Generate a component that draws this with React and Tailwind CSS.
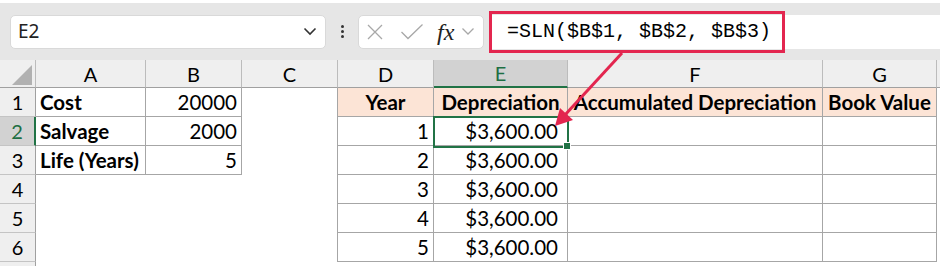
import React from "react";

const CELL_FONT = { fontFamily: "Lato, 'Liberation Sans', sans-serif" };

function HeaderCell({ label, selected }) {
  if (selected) {
    return (
      <div className="h-[28px] flex items-center justify-center bg-[#d2d2d2] text-[#1e6f43] border-r border-r-[#bcbcbc] border-b-2 border-b-[#217346] text-[20px]">
        {label}
      </div>
    );
  }
  return (
    <div className="h-[28px] flex items-center justify-center bg-[#efefef] text-black border-r border-r-[#bcbcbc] border-b border-b-[#a0a0a0] text-[20px]">
      {label}
    </div>
  );
}

function RowHead({ n, selected, short }) {
  if (selected) {
    return (
      <div className="h-[29px] flex items-center justify-center bg-[#d2d2d2] text-[#1e6f43] border-r-2 border-r-[#217346] border-b border-b-[#c4c4c4] text-[20px]">
        {n}
      </div>
    );
  }
  if (short) {
    return <div className="h-[4px] bg-[#efefef] border-r border-r-[#a0a0a0]"></div>;
  }
  return (
    <div className="h-[29px] flex items-center justify-center bg-[#efefef] text-black border-r border-r-[#a0a0a0] border-b border-b-[#c4c4c4] text-[20px]">
      {n}
    </div>
  );
}

const B = "border-[#a6a6a6]";

export default function App() {
  const dataRows = [1, 2, 3, 4, 5];
  return (
    <div className="relative w-[940px] h-[266px] overflow-hidden bg-white" style={CELL_FONT}>
      {/* top white strip */}
      <div className="h-[3px] bg-white"></div>
      {/* formula bar */}
      <div className="h-[57px] bg-[#e6e6e6] flex items-center">
        <div className="ml-[10px] w-[316px] h-[34px] bg-white rounded-[5px] border border-[#d9d9d9] flex items-center justify-between pl-[7px] pr-[8px]">
          <span className="text-[19px] text-[#222] leading-none" style={{ fontFamily: "'Noto Sans', 'Open Sans', sans-serif" }}>E2</span>
          <svg width="14" height="9" viewBox="0 0 14 9">
            <path d="M1.5 1.5 L7 7 L12.5 1.5" fill="none" stroke="#333" strokeWidth="1.6" />
          </svg>
        </div>
        <div className="w-[32px] flex flex-col items-center justify-center gap-[2px]">
          <span className="w-[3px] h-[3px] rounded-full bg-[#333]"></span>
          <span className="w-[3px] h-[3px] rounded-full bg-[#333]"></span>
          <span className="w-[3px] h-[3px] rounded-full bg-[#333]"></span>
        </div>
        <div className="w-[126px] h-[34px] bg-white rounded-[5px] border border-[#d9d9d9] flex items-center pl-[7px]">
          <svg width="18" height="18" viewBox="0 0 18 18" className="shrink-0">
            <path d="M2 2 L16 16 M16 2 L2 16" stroke="#a8a8a8" strokeWidth="1.3" fill="none" />
          </svg>
          <svg width="24" height="18" viewBox="0 0 24 18" className="ml-[16px] shrink-0">
            <path d="M1.5 9 L8 15.5 L22.5 1.5" stroke="#a8a8a8" strokeWidth="1.3" fill="none" />
          </svg>
          <span className="ml-[13px] text-[24px] italic leading-none text-[#222]" style={{ fontFamily: "'Liberation Serif', serif" }}>fx</span>
          <svg width="14" height="9" viewBox="0 0 14 9" className="ml-[7px] shrink-0">
            <path d="M1.5 1.5 L7 7 L12.5 1.5" fill="none" stroke="#a8a8a8" strokeWidth="1.3" />
          </svg>
        </div>
        <div className="ml-[5px] flex-1 h-[34px] bg-white flex items-center pl-[18px]">
          <span className="text-[20px] leading-none text-black" style={{ fontFamily: "'Liberation Mono', monospace" }}>=SLN($B$1, $B$2, $B$3)</span>
        </div>
      </div>

      {/* grid */}
      <div className="grid grid-cols-[36px_110px_96px_96px_96px_134px_255px_114px_1fr] text-[20.5px] text-black">
        {/* header row */}
        <div className="h-[28px] bg-[#efefef] border-r border-r-[#bcbcbc] border-b border-b-[#a0a0a0] flex items-end justify-end pr-[3px] pb-[2px]">
          <svg width="20" height="20" viewBox="0 0 20 20">
            <polygon points="20,0 20,20 0,20" fill="#b1b1b1" />
          </svg>
        </div>
        <HeaderCell label="A" />
        <HeaderCell label="B" />
        <HeaderCell label="C" />
        <HeaderCell label="D" />
        <HeaderCell label="E" selected />
        <HeaderCell label="F" />
        <HeaderCell label="G" />
        <div className="h-[28px] bg-[#efefef] border-b border-b-[#a0a0a0]"></div>

        {/* row 1 */}
        <RowHead n={1} />
        <div className={`h-[29px] flex items-center pl-[4px] font-bold border-r border-b ${B}`}>Cost</div>
        <div className={`h-[29px] flex items-center justify-end pr-[4px] border-r border-b ${B}`}>20000</div>
        <div className={`h-[29px] border-r ${B}`}></div>
        <div className={`h-[29px] flex items-center justify-center font-bold bg-[#fce4d6] border-r border-b ${B}`}>Year</div>
        <div className={`h-[29px] flex items-center justify-center font-bold bg-[#fce4d6] border-r border-b ${B}`}>Depreciation</div>
        <div className={`h-[29px] flex items-center justify-center font-bold whitespace-nowrap bg-[#fce4d6] border-r border-b ${B}`}>Accumulated Depreciation</div>
        <div className={`h-[29px] flex items-center justify-center font-bold whitespace-nowrap bg-[#fce4d6] border-r border-b ${B}`}>Book Value</div>
        <div className="h-[29px]"></div>

        {dataRows.map((y) => {
          const rowNum = y + 1;
          const aText = rowNum === 2 ? "Salvage" : rowNum === 3 ? "Life (Years)" : "";
          const bText = rowNum === 2 ? "2000" : rowNum === 3 ? "5" : "";
          const inAB = rowNum <= 3;
          return (
            <React.Fragment key={y}>
              <RowHead n={rowNum} selected={rowNum === 2} />
              {inAB ? (
                <div className={`h-[29px] flex items-center pl-[4px] font-bold whitespace-nowrap border-r border-b ${B}`}>{aText}</div>
              ) : (
                <div className="h-[29px]"></div>
              )}
              {inAB ? (
                <div className={`h-[29px] flex items-center justify-end pr-[4px] border-r border-b ${B}`}>{bText}</div>
              ) : (
                <div className="h-[29px]"></div>
              )}
              <div className={`h-[29px] border-r ${B}`}></div>
              <div className={`h-[29px] flex items-center justify-end pr-[4px] border-r border-b ${B}`}>{y}</div>
              <div className={`h-[29px] flex items-center justify-end pr-[9px] border-r border-b ${B}`}>$3,600.00</div>
              <div className={`h-[29px] border-r border-b ${B}`}></div>
              <div className={`h-[29px] border-r border-b ${B}`}></div>
              <div className="h-[29px]"></div>
            </React.Fragment>
          );
        })}
        <RowHead short />
      </div>

      {/* red highlight around formula */}
      <div className="absolute left-[489px] top-[11px] w-[296px] h-[42px] border-[3px] border-[#e3264f] pointer-events-none"></div>

      {/* selected cell E2 */}
      <div className="absolute left-[433px] top-[116px] w-[136px] h-[32px] border-2 border-[#217346] pointer-events-none"></div>
      <div className="absolute left-[563px] top-[142px] w-[8px] h-[8px] bg-[#217346] border border-white pointer-events-none"></div>

      {/* arrow */}
      <svg className="absolute left-0 top-0 pointer-events-none" width="940" height="266" viewBox="0 0 940 266">
        <line x1="622" y1="53" x2="564" y2="116" stroke="#e3264f" strokeWidth="3" />
        <polygon points="555,126 560,108 573,120" fill="#e3264f" />
      </svg>
    </div>
  );
}
